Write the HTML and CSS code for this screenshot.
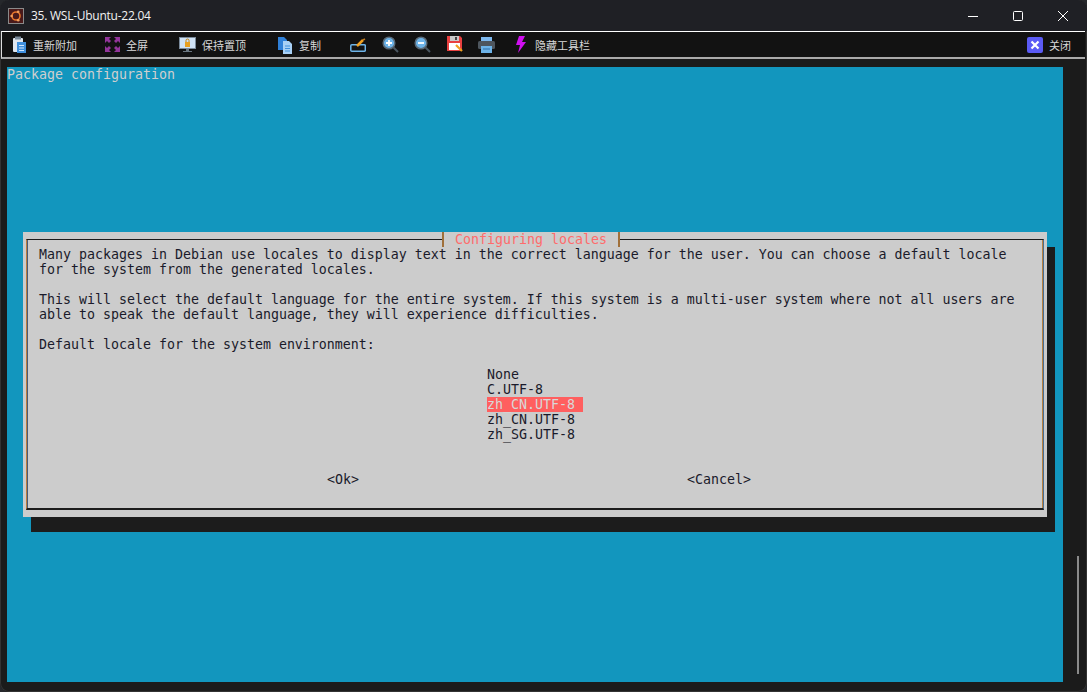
FILE: index.html
```html
<!DOCTYPE html>
<html lang="zh">
<head>
<meta charset="utf-8">
<title>35. WSL-Ubuntu-22.04</title>
<link rel="stylesheet" href="styles.css">
</head>
<body>
<div class="window">
  <header class="titlebar">
    <svg class="appicon" width="16" height="16" viewBox="0 0 16 16"><rect x="0.5" y="0.5" width="15" height="15" fill="#4a1a1a" stroke="#8a8a8a"/><circle cx="8" cy="8" r="4" fill="none" stroke="#e8752a" stroke-width="1.6"/><circle cx="3.6" cy="8" r="1.3" fill="#f0a060"/><circle cx="10.2" cy="3.8" r="1.3" fill="#f0a060"/><circle cx="10.2" cy="12.2" r="1.3" fill="#f0a060"/></svg>
    <span class="wintitle">35. WSL-Ubuntu-22.04</span>
    <div class="controls">
      <svg width="10" height="10" viewBox="0 0 10 10"><path d="M0 5.5H10" stroke="#fff" stroke-width="1"/></svg>
      <svg width="10" height="10" viewBox="0 0 10 10"><rect x="0.5" y="0.5" width="9" height="9" rx="1" fill="none" stroke="#fff"/></svg>
      <svg width="10" height="10" viewBox="0 0 10 10"><path d="M0 0L10 10M10 0L0 10" stroke="#fff" stroke-width="1"/></svg>
    </div>
  </header>
  <nav class="toolbar">
    <div class="tool tool-reattach">
      <svg width="15" height="18" viewBox="0 0 15 18"><rect x="1" y="2" width="10" height="14" rx="1" fill="#dfe6ee"/><rect x="3" y="0.5" width="6" height="3" fill="#7a8a9a"/><rect x="5" y="6" width="9" height="11" fill="#3f8fdc"/><path d="M7 9.5h5M7 12h5M7 14.500h5" stroke="#cfe6ff"/></svg>
      <span>重新附加</span>
    </div>
    <div class="tool tool-full">
      <svg width="15" height="15" viewBox="0 0 15 15"><g fill="#93359b"><path d="M0 0h6L4 2l2 2-2 2-2-2-2 2z"/><path d="M15 0H9l2 2-2 2 2 2 2-2 2 2z"/><path d="M0 15h6l-2-2 2-2-2-2-2 2-2-2z"/><path d="M15 15H9l2-2-2-2 2-2 2 2 2-2z"/></g></svg>
      <span>全屏</span>
    </div>
    <div class="tool tool-top">
      <svg width="17" height="16" viewBox="0 0 17 16"><rect x="0.500" y="0.500" width="16" height="11" fill="#cfe2f5" stroke="#7a8a9a"/><rect x="6" y="5" width="5" height="5" fill="#e8a020"/><path d="M7 5V3.500a1.500 1.500 0 0 1 3 0V5" fill="none" stroke="#c08010"/><rect x="7" y="12" width="3" height="2" fill="#6a7680"/><rect x="4" y="14" width="9" height="1" fill="#6a7680"/></svg>
      <span>保持置顶</span>
    </div>
    <div class="tool tool-copy">
      <svg width="15" height="18" viewBox="0 0 15 18"><path d="M0 1h6l3 3v10H0z" fill="#2f80d8"/><path d="M5 5h6l3 3v10H5z" fill="#a8d0f5"/><path d="M7 10h5M7 12.500h5M7 15h5" stroke="#3f8fdc"/></svg>
      <span>复制</span>
    </div>
    <svg class="ic ic-edit" width="16" height="16" viewBox="0 0 16 16"><rect x="0.800" y="7.800" width="14.500" height="6.500" rx="1" fill="none" stroke="#6db3e8" stroke-width="1.500"/><path d="M7 9L13 3" stroke="#f0a020" stroke-width="2.500"/><path d="M13 3l2-1" stroke="#c07820" stroke-width="1.500"/></svg>
    <svg class="ic" width="17" height="17" viewBox="0 0 17 17"><circle cx="7" cy="7" r="5.800" fill="#6db3e8" stroke="#5a6a78" stroke-width="1.500"/><path d="M4 7h6M7 4v6" stroke="#fff" stroke-width="1.800"/><path d="M11.500 11.500L16 16" stroke="#4a5660" stroke-width="2"/></svg>
    <svg class="ic" width="17" height="17" viewBox="0 0 17 17"><circle cx="7" cy="7" r="5.800" fill="#6db3e8" stroke="#5a6a78" stroke-width="1.500"/><path d="M4 7h6" stroke="#fff" stroke-width="1.800"/><path d="M11.500 11.500L16 16" stroke="#4a5660" stroke-width="2"/></svg>
    <svg class="ic" width="16" height="17" viewBox="0 0 16 17"><path d="M0 0h13l2 2v13H0z" fill="#e84040"/><rect x="3" y="0" width="9" height="5" fill="#c8c8c8"/><rect x="8" y="1" width="2" height="3" fill="#444"/><rect x="2" y="7" width="11" height="7" fill="#fff"/><path d="M9 9l6 6" stroke="#f0a020" stroke-width="2.200"/></svg>
    <svg class="ic" width="17" height="16" viewBox="0 0 17 16"><rect x="3" y="0" width="11" height="5" fill="#7db8ee"/><rect x="0" y="4" width="17" height="8" rx="1.500" fill="#4e565e"/><rect x="3" y="9" width="11" height="7" fill="#6db3e8"/><path d="M5 12h7" stroke="#2f6fa8"/></svg>
    <svg class="ic ic-bolt" width="10" height="17" viewBox="0 0 10 17"><path d="M3 0h6L6 6h4L2 17l2-8H0z" fill="#d010f0"/></svg>
    <span class="tool-label-hide">隐藏工具栏</span>
    <div class="tool tool-close">
      <svg width="16" height="16" viewBox="0 0 16 16"><rect width="16" height="16" rx="2" fill="#5b5bf5"/><path d="M4.500 4.500L11.500 11.500M11.500 4.500L4.500 11.500" stroke="#fff" stroke-width="2.200"/></svg>
      <span>关闭</span>
    </div>
  </nav>
  <main class="content">
    <section class="terminal">
      <pre class="pkg">Package configuration</pre>
      <div class="dialog">
        <div class="frame">
          <div class="frametitle">Configuring locales</div>
          <pre class="msg">Many packages in Debian use locales to display text in the correct language for the user. You can choose a default locale
for the system from the generated locales.

This will select the default language for the entire system. If this system is a multi-user system where not all users are
able to speak the default language, they will experience difficulties.

Default locale for the system environment:</pre>
          <pre class="list">None
C.UTF-8
<span class="sel">zh_CN.UTF-8 </span>
zh_CN.UTF-8
zh_SG.UTF-8</pre>
          <div class="buttons"><pre class="btn-ok">&lt;Ok&gt;</pre><pre class="btn-cancel">&lt;Cancel&gt;</pre></div>
        </div>
      </div>
    </section>
    <div class="rail"><div class="thumb"></div></div>
  </main>
</div>
</body>
</html>
```
FILE: styles.css
```css
* { box-sizing: border-box; }
html, body { margin: 0; padding: 0; background: #26282c; }
pre { margin: 0; font: inherit; }
.window {
  width: 1087px; height: 692px; background: #1b1b1b; overflow: hidden;
  border-radius: 9px; display: flex; flex-direction: column;
  box-shadow: inset 0 0 0 1px #333;
}
.titlebar {
  height: 31px; flex: none; background: #1f2025; display: flex; align-items: center;
  padding-left: 8px; color: #fff;
}
.appicon { margin-right: 7px; }
.wintitle { font: 12px "Open Sans", "Noto Sans", sans-serif; color: #f2f2f2; letter-spacing: -0.25px; }
.controls { margin-left: auto; display: flex; gap: 35px; padding-right: 19px; }
.toolbar {
  height: 28px; flex: none; margin: 0 2px 0 1px; background: #121212;
  border-top: 1px solid #fff; border-left: 1px solid #ddd; border-bottom: 2px solid #aaa;
  display: flex; align-items: center; padding-left: 10px;
  font: 11px "Noto Sans CJK SC", sans-serif; color: #d8d8d8;
}
.tool { display: flex; align-items: center; gap: 6px; }
.tool-full { margin-left: 28px; }
.tool-top { margin-left: 31px; }
.tool-copy { margin-left: 32px; }
.ic { margin-left: 15.5px; flex: none; }
.ic-edit { margin-left: 29px; }
.ic-bolt { margin-left: 21px; }
.tool-label-hide { margin-left: 9px; }
.tool-close { margin-left: auto; padding-right: 14px; gap: 6px; }
.content { flex: 1; display: flex; padding: 8px 0 10px 7px; }
.terminal {
  width: 1056px; height: 615px; flex: none; background: #1296be;
  font: 13.29px/15px "DejaVu Sans Mono", monospace; color: #cfcfcf;
}
.pkg { height: 15px; }
.dialog {
  width: 1024px; height: 285px; margin: 150px 0 0 16px; padding: 7px 3px 7px 3px;
  background: #cccccc; box-shadow: 8px 15px 0 #1c1c1c; color: #1a1a2a;
}
.frame {
  position: relative; height: 271px; padding: 7px 0 0 12px;
  border-top: 1px solid #1c1c1c; border-bottom: 2px solid #1c1c1c;
  border-left: 1px solid #b8803f; border-right: 1px solid #4a6e92;
  box-shadow: inset 1px 0 0 #4a5a7a, inset -1px 0 0 #b8803f;
}
.frametitle {
  position: absolute; top: -8px; left: 415px; width: 178px; height: 15px; padding-left: 11px;
  background: #cccccc; color: #ff6b6b;
  border-left: 2px solid #a0703a; border-right: 2px solid #a0703a;
}
.list { margin: 15px 0 0 448px; }
.sel { background: #ff5f5f; color: #d8d8d8; }
.buttons { display: flex; margin: 30px 0 0 288px; }
.btn-cancel { margin-left: 328px; }
.rail { flex: 1; padding: 489px 0 0 14px; }
.thumb { width: 2px; height: 118px; background: #8a8a8a; }
```
